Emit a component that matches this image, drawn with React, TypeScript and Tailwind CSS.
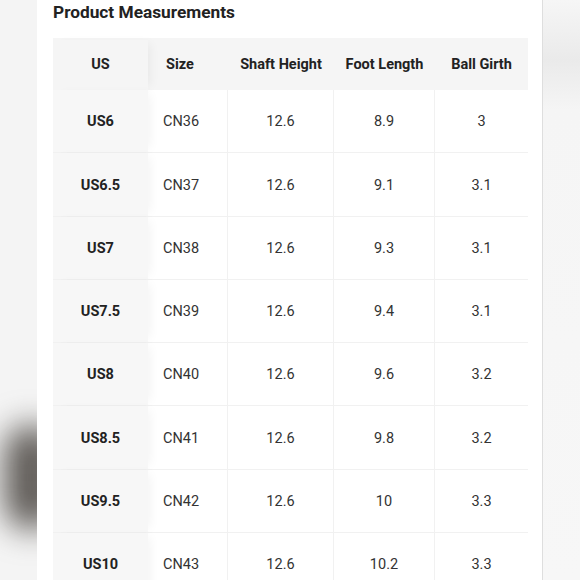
import React from "react";

const rows: [string, string, string, string, string][] = [
  ["US6", "CN36", "12.6", "8.9", "3"],
  ["US6.5", "CN37", "12.6", "9.1", "3.1"],
  ["US7", "CN38", "12.6", "9.3", "3.1"],
  ["US7.5", "CN39", "12.6", "9.4", "3.1"],
  ["US8", "CN40", "12.6", "9.6", "3.2"],
  ["US8.5", "CN41", "12.6", "9.8", "3.2"],
  ["US9.5", "CN42", "12.6", "10", "3.3"],
  ["US10", "CN43", "12.6", "10.2", "3.3"],
];

export default function App() {
  return (
    <div
      className="w-[580px] h-[580px] overflow-hidden flex bg-[#f4f4f4]"
      style={{ fontFamily: "Roboto, 'Noto Sans', sans-serif" }}
    >
      <div className="w-[37px] shrink-0 relative bg-[#f4f4f4] overflow-hidden">
        <div className="absolute left-[4px] top-[425px] w-[56px] h-[105px] rounded-full bg-[#5f5b57] blur-[16px]" />
      </div>
      <div className="w-[505px] shrink-0 bg-white pl-[16px]">
        <div className="h-[38px] pt-[1px] text-[17.3px] font-bold text-[#222] leading-[22px]">
          Product Measurements
        </div>
        <div className="w-[475px]">
          <div className="flex h-[52px] pt-[2px] bg-[#f5f5f5] text-[14.5px] font-bold text-[#222]">
            <div className="w-[95px] flex items-center justify-center relative z-10 shadow-[6px_0_10px_-4px_rgba(0,0,0,0.06)]">
              US
            </div>
            <div className="w-[80px] flex items-center pl-[18px]">Size</div>
            <div className="w-[106px] flex items-center justify-center">Shaft Height</div>
            <div className="w-[101px] flex items-center justify-center">Foot Length</div>
            <div className="w-[93px] flex items-center justify-center">Ball Girth</div>
          </div>
          {rows.map((r) => (
            <div key={r[0]} className="flex h-[63.3px] text-[14.5px] text-[#333] border-b border-[#f1f1f1]">
              <div className="w-[95px] flex items-center justify-center pt-[2px] bg-[#f7f7f7] font-bold text-[#222] relative z-10 shadow-[6px_0_10px_-4px_rgba(0,0,0,0.05)]">
                {r[0]}
              </div>
              <div className="w-[80px] flex items-center pt-[2px] pl-[15px] border-r border-[#f1f1f1]">{r[1]}</div>
              <div className="w-[106px] flex items-center justify-center pt-[2px] border-r border-[#f1f1f1]">{r[2]}</div>
              <div className="w-[101px] flex items-center justify-center pt-[2px] border-r border-[#f1f1f1]">{r[3]}</div>
              <div className="w-[93px] flex items-center justify-center pt-[2px]">{r[4]}</div>
            </div>
          ))}
        </div>
      </div>
      <div className="w-[1px] shrink-0 bg-[#dedede]" />
      <div className="flex-1 bg-[linear-gradient(to_bottom,#f6f6f6_0px,#eaeaea_60px,#f5f5f5_110px,#f7f7f7_580px)]" />
    </div>
  );
}
